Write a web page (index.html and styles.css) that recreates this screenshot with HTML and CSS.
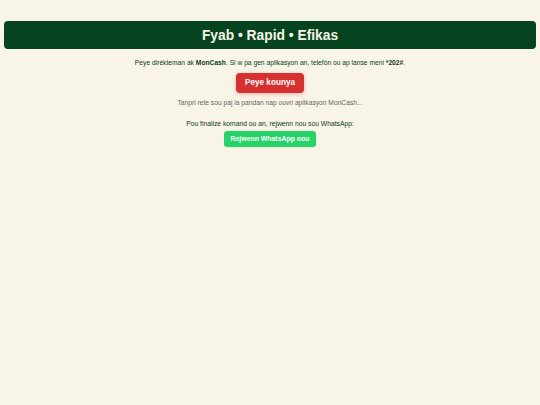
FILE: index.html
```html
<!DOCTYPE html>
<html lang="ht">
<head>
<meta charset="utf-8">
<title>Fyab • Rapid • Efikas</title>
<link rel="stylesheet" href="styles.css">
</head>
<body>
<header class="hero">Fyab • Rapid • Efikas</header>
<main class="content">
  <p class="lead">Peye dirèkteman ak <strong>MonCash</strong>. Si w pa gen aplikasyon an, telefòn ou ap lanse meni <strong>*202#</strong>.</p>
  <a class="btn btn-pay" href="#">Peye kounya</a>
  <p class="wait">Tanpri rete sou paj la pandan nap ouvri aplikasyon MonCash...</p>
  <p class="note">Pou finalize komand ou an, rejwenn nou sou WhatsApp:</p>
  <a class="btn btn-wa" href="#">Rejwenn WhatsApp nou</a>
</main>
</body>
</html>
```
FILE: styles.css
```css
html, body {
  margin: 0;
  padding: 0;
  background: #f8f4e6;
  font-family: "Liberation Sans", Arial, sans-serif;
  color: #0b3d1c;
}
body {
  padding: 21px 4px 0;
}
.hero {
  height: 28px;
  line-height: 29px;
  background: #064420;
  border-radius: 4px;
  color: #f8f4e6;
  font-weight: bold;
  font-size: 13.8px;
  text-align: center;
}
.content {
  display: flex;
  flex-direction: column;
  align-items: center;
  text-align: center;
}
.lead {
  margin: 9px 0 0;
  font-size: 6.7px;
  line-height: 10px;
  color: #0b3d1c;
}
.btn {
  display: inline-block;
  text-decoration: none;
  color: #fff;
  font-weight: bold;
  border-radius: 4px;
}
.btn-pay {
  margin-top: 5px;
  width: 68px;
  height: 20px;
  line-height: 20px;
  font-size: 8.2px;
  background: #d63031;
  box-shadow: 0 1px 4px rgba(214, 48, 49, 0.35);
}
.wait {
  margin: 5px 0 0;
  font-size: 6.7px;
  line-height: 10px;
  color: #666;
}
.note {
  margin: 11px 0 0;
  font-size: 6.75px;
  line-height: 10px;
  color: #0b3d1c;
}
.btn-wa {
  margin-top: 2px;
  width: 92px;
  height: 16px;
  line-height: 16px;
  font-size: 6.9px;
  background: #25d366;
  border-radius: 3px;
}
```
